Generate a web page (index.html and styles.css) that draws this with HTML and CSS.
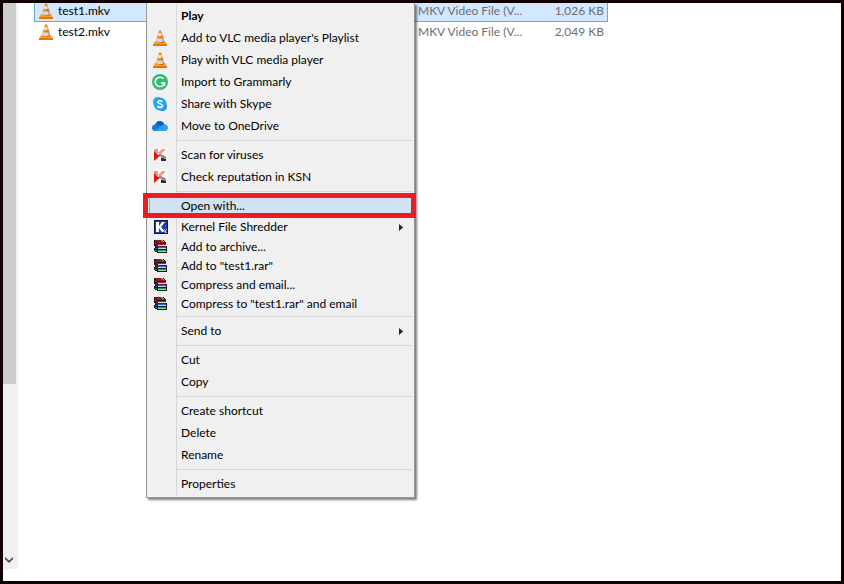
FILE: index.html
```html
<!DOCTYPE html>
<html lang="en">
<head>
    <meta charset="UTF-8">
    <meta name="viewport" content="width=device-width, initial-scale=1.0">
    <title>Open with...</title>
    <link rel="stylesheet" href="styles.css">
</head>
<body>
    <!-- shared icons -->
    <svg class="defs" aria-hidden="true">
        <defs>
            <linearGradient id="orange" x1="0" x2="1" y1="0" y2="0">
                <stop offset="0" stop-color="#f9a040"/>
                <stop offset="0.5" stop-color="#f58210"/>
                <stop offset="1" stop-color="#c95700"/>
            </linearGradient>
            <symbol id="vlc" viewBox="0 0 16 16">
                <path d="M3 11h10l2 4H1z" fill="#f9a02a"/>
                <path d="M1 14h14v2H1z" fill="#e57504"/>
                <path d="M7 .5h2l3.500 11.500q-4.500 2.500-9 0z" fill="url(#orange)"/>
                <path d="M6.400 3h3.200l.9 3H5.500z" fill="#e4e6e8"/>
                <path d="M4.700 8.500h6.600l.8 2.700q-4.100 1.600-8.200 0z" fill="#d5d8dc"/>
                <path d="M9 3h.6l.9 3h-1zM10 8.500h1.300l.8 2.700-1.500.5z" fill="#a4a8ad"/>
            </symbol>
            <symbol id="kaspersky" viewBox="0 0 16 16">
                <path d="M1 1h14v14H1z" fill="#fafafa"/>
                <path d="M2 2h4v5L2 5z" fill="#ef8f87"/>
                <path d="M6 6l4-4h4L8 8z" fill="#f0958c"/>
                <path d="M2 4l4 4 4-1-8 7z" fill="#e1140f"/>
                <path d="M8 8h3l3 2v3h-2l-4-4z" fill="#8b8b8b"/>
                <path d="M9 11h2l1 1h2v2H9z" fill="#2d2d2d"/>
            </symbol>
            <symbol id="winrar" viewBox="0 0 16 16" shape-rendering="crispEdges">
                <path d="M2 1h9l1 1h1l1 2v3h1v7H5l-1-1H3l-1-2V9l1-1-1-2z" fill="#181818"/>
                <path d="M3 1h8l2 3H6L3 2z" fill="#8e1824"/>
                <path d="M3 3l3 2h8v1H6L3 5z" fill="#a8233a"/>
                <path d="M6 6h8v1H6z" fill="#e3dede"/>
                <path d="M3 6h2v1h9v1H5L3 7z" fill="#6d1238"/>
                <path d="M6 8h8v1H6z" fill="#2b66e0"/>
                <path d="M6 9h8v1H6z" fill="#a9dcf5"/>
                <path d="M3 9h2v1H3z" fill="#1e45bd"/>
                <path d="M6 11h8v1H6z" fill="#14a04e"/>
                <path d="M6 12h8v1H6z" fill="#7fe6b4"/>
                <path d="M3 11h2v1H3z" fill="#0f8a40"/>
                <path d="M9 1h2l1 2h-2z" fill="#b08f3a"/>
            </symbol>
        </defs>
    </svg>

    <div class="window">
        <div class="scrollbar">
            <div class="thumb"></div>
            <button class="scroll-down" aria-label="Scroll down">
                <svg viewBox="0 0 8 6" width="8" height="6"><path d="M0 0l4 3.500L8 0v2.300L4 6 0 2.300z" fill="#505050"/></svg>
            </button>
        </div>

        <main class="files">
            <table class="file-table">
                <tr class="selected">
                    <td class="name"><svg class="icon"><use href="#vlc"/></svg>test1.mkv</td>
                    <td class="type">MKV Video File (V...</td>
                    <td class="size">1,026 KB</td>
                </tr>
                <tr>
                    <td class="name"><svg class="icon"><use href="#vlc"/></svg>test2.mkv</td>
                    <td class="type">MKV Video File (V...</td>
                    <td class="size">2,049 KB</td>
                </tr>
            </table>
        </main>

        <div class="menu" role="menu">
            <button class="item default" role="menuitem">Play</button>
            <button class="item" role="menuitem"><svg class="icon"><use href="#vlc"/></svg>Add to VLC media player's Playlist</button>
            <button class="item" role="menuitem"><svg class="icon"><use href="#vlc"/></svg>Play with VLC media player</button>
            <button class="item" role="menuitem">
                <svg class="icon" viewBox="0 0 16 16">
                    <circle cx="8" cy="8" r="8" fill="#37b877"/>
                    <path d="M11.500 4.800A4.700 4.700 0 1 0 12.500 9H9" fill="none" stroke="#fff" stroke-width="1.500"/>
                    <path d="M12.500 8.500v3.500" stroke="#fff" stroke-width="1.300"/>
                </svg>Import to Grammarly
            </button>
            <button class="item" role="menuitem">
                <svg class="icon" viewBox="0 0 16 16">
                    <circle cx="5.500" cy="5.500" r="4.500" fill="#36b3f2"/>
                    <circle cx="10.500" cy="10.500" r="4.500" fill="#1c90e8"/>
                    <circle cx="8" cy="8" r="6.500" fill="#27a3f0"/>
                    <path d="M10.300 5.800C9.500 4.300 5.800 4.300 5.800 6.200c0 2 4.600 1.200 4.600 3.500 0 2.200-4.100 2.200-4.900.4" fill="none" stroke="#fff" stroke-width="1.600"/>
                </svg>Share with Skype
            </button>
            <button class="item" role="menuitem">
                <svg class="icon" viewBox="0 0 16 16">
                    <path d="M3 8c0-3 2-5 5-5 2 0 3.500 1 4.200 3L10 10z" fill="#0b5cc0"/>
                    <path d="M3.500 6.500C1 6.500 0 8 0 10c0 2 1.300 3 3 3l8-4-4-2c-1-.5-2-.5-3.500-.5z" fill="#1479d8"/>
                    <path d="M8 9l3-2.500c3-1 5 .8 5 3.300 0 2-1.200 3.200-3 3.200H3z" fill="#28a2ec"/>
                </svg>Move to OneDrive
            </button>
            <hr>
            <button class="item" role="menuitem"><svg class="icon"><use href="#kaspersky"/></svg>Scan for viruses</button>
            <button class="item" role="menuitem"><svg class="icon"><use href="#kaspersky"/></svg>Check reputation in KSN</button>
            <hr>
            <button class="item active" role="menuitem">Open with...</button>
            <button class="item medium" role="menuitem">
                <svg class="icon" viewBox="0 0 16 16">
                    <path d="M2 1h14v14H2z" fill="#0c1440"/>
                    <path d="M3 2h12v12H3z" fill="#1f3fae"/>
                    <path d="M4 3h3v4l3-4h3l-4 5 4 5h-3L7 9v4H4z" fill="#fff"/>
                    <path d="M12 10h1v1h-1zM14 10h1v1h-1zM11 12h2v1h-2zM13 11h1v3h-1zM14 13h1v1h-1z" fill="#d8c338"/>
                </svg>Kernel File Shredder
                <svg class="arrow" viewBox="0 0 4 7"><path d="M0 0l4 3.500L0 7z" fill="#222"/></svg>
            </button>
            <button class="item small" role="menuitem"><svg class="icon"><use href="#winrar"/></svg>Add to archive...</button>
            <button class="item small" role="menuitem"><svg class="icon"><use href="#winrar"/></svg>Add to "test1.rar"</button>
            <button class="item small" role="menuitem"><svg class="icon"><use href="#winrar"/></svg>Compress and email...</button>
            <button class="item small" role="menuitem"><svg class="icon"><use href="#winrar"/></svg>Compress to "test1.rar" and email</button>
            <hr>
            <button class="item" role="menuitem">Send to
                <svg class="arrow" viewBox="0 0 4 7"><path d="M0 0l4 3.500L0 7z" fill="#222"/></svg>
            </button>
            <hr>
            <button class="item" role="menuitem">Cut</button>
            <button class="item" role="menuitem">Copy</button>
            <hr>
            <button class="item" role="menuitem">Create shortcut</button>
            <button class="item" role="menuitem">Delete</button>
            <button class="item" role="menuitem">Rename</button>
            <hr>
            <button class="item" role="menuitem">Properties</button>
        </div>
    </div>
</body>
</html>
```
FILE: styles.css
```css
* {
    box-sizing: border-box;
}

body {
    margin: 0;
    font-family: Lato, "Open Sans", sans-serif;
    font-size: 12px;
    line-height: 16px;
    color: #000;
    background: #fff;
}

button {
    font: inherit;
    color: inherit;
    border: none;
    background: none;
    padding: 0;
}

.defs {
    position: absolute;
    width: 0;
    height: 0;
}

.window {
    position: relative;
    display: flex;
    min-height: 100vh;
    border: 3px solid #100000;
    overflow: hidden;
}

/* Scrollbar of the left pane */
.scrollbar {
    display: flex;
    flex-direction: column;
    justify-content: space-between;
    width: 14px;
    margin-bottom: 12px;
    background: #f0f0f0;
    box-shadow: 2px 0 #f8f8f8;
}

.thumb {
    width: 13px;
    height: 381px;
    background: #cdcdcd;
}

.scroll-down {
    display: flex;
    align-items: center;
    justify-content: center;
    width: 12px;
    height: 18px;
}

/* File list */
.files {
    flex: 1;
    padding-left: 17px;
}

.file-table {
    width: 574px;
    max-width: 100%;
    margin-top: -2px;
    border-collapse: separate;
    border-spacing: 0;
    table-layout: fixed;
}

.file-table td {
    height: 20px;
    padding: 0 4px;
    border: 0 solid #66a7e8;
    color: #6d6d6d;
    white-space: nowrap;
}

.file-table .name {
    display: flex;
    align-items: center;
    gap: 4px;
    color: #000;
}

.file-table .type {
    width: 120px;
}

.file-table .size {
    width: 74px;
    text-align: right;
}

.file-table .selected td {
    height: 21px;
    background: #d1e8ff;
    border-bottom-width: 1px;
}

.file-table .selected .name {
    border-left-width: 1px;
    padding-left: 3px;
}

.file-table .selected .size {
    border-right-width: 1px;
    padding-right: 3px;
}

.icon {
    flex: none;
    width: 16px;
    height: 16px;
}

/* Context menu */
.menu {
    position: absolute;
    top: 0;
    left: 143px;
    width: 269px;
    padding: 2px 0;
    border: 1px solid #979797;
    border-top: none;
    background: linear-gradient(#d7d7d7, #d7d7d7) 29px 2px / 1px calc(100% - 4px) no-repeat #f0f0f0;
    box-shadow: 2px 2px 2px rgba(0, 0, 0, 0.5);
}

.menu hr {
    height: 1px;
    margin: 3px 2px 3px 30px;
    border: none;
    background: #d7d7d7;
}

.item {
    position: relative;
    display: flex;
    align-items: center;
    width: 100%;
    height: 22px;
    padding-left: 34px;
    text-align: left;
    white-space: nowrap;
}

.item .icon {
    margin-left: -29px;
    margin-right: 13px;
}

.item .arrow {
    width: 4px;
    height: 7px;
    margin-left: auto;
    margin-right: 11px;
}

.default {
    font-weight: bold;
}

.medium {
    height: 20px;
}

.small {
    height: 19px;
}

.item.active {
    background: #d1e2f2;
    border-left: 2px solid #f0f0f0;
    padding-left: 32px;
    box-shadow: inset 1px 0 #78aee5;
}

/* Red frame around the highlighted entry */
.active::after {
    content: "";
    position: absolute;
    top: -2px;
    right: -2px;
    bottom: -1px;
    left: -6px;
    border: 5px solid #ed1c24;
    z-index: 1;
}
```
